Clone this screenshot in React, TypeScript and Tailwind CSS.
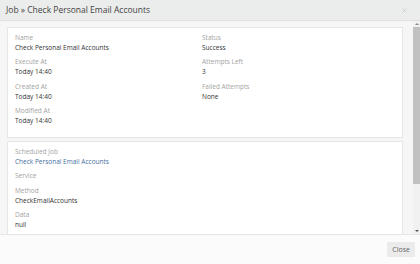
import { X } from "lucide-react"

type Field = { label: string; value?: string; link?: boolean }

const left: Field[] = [
  { label: "Name", value: "Check Personal Email Accounts" },
  { label: "Execute At", value: "Today 14:40" },
  { label: "Created At", value: "Today 14:40" },
  { label: "Modified At", value: "Today 14:40" },
]

const right: Field[] = [
  { label: "Status", value: "Success" },
  { label: "Attempts Left", value: "3" },
  { label: "Failed Attempts", value: "None" },
]

const details: Field[] = [
  { label: "Scheduled Job", value: "Check Personal Email Accounts", link: true },
  { label: "Service" },
  { label: "Method", value: "CheckEmailAccounts" },
  { label: "Data", value: "null" },
]

function FieldRow({ field }: { field: Field }) {
  return (
    <div className="mb-[4.5px]">
      <div className="text-[#a3a3a3]">{field.label}</div>
      {field.value && (
        <div className={field.link ? "text-[#44709f]" : "text-[#333]"}>{field.value}</div>
      )}
    </div>
  )
}

export default function App() {
  return (
    <div className="flex h-[264px] w-[420px] flex-col overflow-hidden bg-white font-['Open_Sans',sans-serif] text-[6.5px] leading-[10px]">
      <div className="flex h-[21px] shrink-0 items-center justify-between border-b border-[#e0e0e0] bg-[#ebecec] pl-[6px] pr-[12px]">
        <span className="text-[8.5px] text-[#444]">Job » Check Personal Email Accounts</span>
        <X className="h-[7px] w-[7px] text-[#bdbdbd]" strokeWidth={2} />
      </div>

      <div className="flex min-h-0 flex-1 bg-[#f6f6f6]">
        <div className="flex min-w-0 flex-1 flex-col gap-[3px] overflow-hidden pl-[7px] pr-[4px] pt-[6px]">
          <div className="grid shrink-0 grid-cols-[187px_1fr] border border-[#e6e6e6] bg-white px-[7px] pb-[6px] pt-[4.5px]">
            <div>
              {left.map((f) => (
                <FieldRow key={f.label} field={f} />
              ))}
            </div>
            <div>
              {right.map((f) => (
                <FieldRow key={f.label} field={f} />
              ))}
            </div>
          </div>
          <div className="min-h-[120px] shrink-0 border border-[#e6e6e6] bg-white px-[7px] pt-[5px]">
            {details.map((f) => (
              <FieldRow key={f.label} field={f} />
            ))}
          </div>
        </div>
        <div className="flex w-[13px] shrink-0 justify-end">
          <div className="flex w-[7px] flex-col items-center bg-[#f1f1f1]">
            <div className="flex h-[6px] items-center justify-center">
              <div className="h-0 w-0 border-x-[2px] border-b-[2px] border-x-transparent border-b-[#888]" />
            </div>
            <div className="h-[157px] w-full bg-[#c1c1c1]" />
            <div className="flex-1" />
            <div className="flex h-[6px] items-center justify-center">
              <div className="h-0 w-0 border-x-[2px] border-t-[2px] border-x-transparent border-t-[#555]" />
            </div>
          </div>
        </div>
      </div>

      <div className="flex h-[30px] shrink-0 items-center justify-end border-t border-[#e5e5e5] bg-[#fbfbfb] pr-[5px]">
        <button className="h-[15px] rounded-[1px] bg-[#ebebeb] px-[5px] text-[7px] text-[#666]">Close</button>
      </div>
    </div>
  )
}
